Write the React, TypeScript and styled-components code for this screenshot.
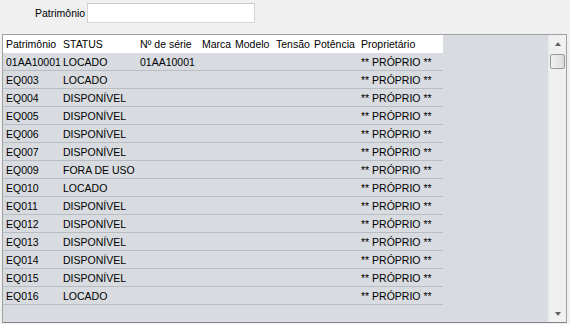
import React from 'react';
import styled, { createGlobalStyle } from 'styled-components';

const GlobalStyle = createGlobalStyle`
	html, body {
		margin: 0;
		padding: 0;
		background: #f0f0f0;
		font-family: Tahoma, "Liberation Sans", "DejaVu Sans", sans-serif;
		font-size: 10.5px;
		color: #000;
	}
`;

const COLUMNS = '58px 77px 62px 33px 41px 38px 47px 84px';

const rows: Array<[string, string, string]> = [
	['01AA10001', 'LOCADO', '01AA10001'],
	['EQ003', 'LOCADO', ''],
	['EQ004', 'DISPONÍVEL', ''],
	['EQ005', 'DISPONÍVEL', ''],
	['EQ006', 'DISPONÍVEL', ''],
	['EQ007', 'DISPONÍVEL', ''],
	['EQ009', 'FORA DE USO', ''],
	['EQ010', 'LOCADO', ''],
	['EQ011', 'DISPONÍVEL', ''],
	['EQ012', 'DISPONÍVEL', ''],
	['EQ013', 'DISPONÍVEL', ''],
	['EQ014', 'DISPONÍVEL', ''],
	['EQ015', 'DISPONÍVEL', ''],
	['EQ016', 'LOCADO', ''],
];

const Page = styled.div`
	width: 570px;
	height: 324px;
	display: flex;
	flex-direction: column;
	overflow: hidden;
`;

const FilterBar = styled.div`
	height: 34px;
	display: flex;
	align-items: flex-start;
	padding: 3px 0 0 35px;
	box-sizing: border-box;
	gap: 3px;
`;

const Label = styled.label`
	line-height: 20px;
	width: 49px;
	text-align: right;
	white-space: nowrap;
`;

const Input = styled.input`
	width: 168px;
	height: 20px;
	margin: 0;
	box-sizing: border-box;
	border: 1px solid #d4d4d4;
	border-top-color: #c8c8c8;
	background: #fff;
	padding: 0 3px;
	font: inherit;
	outline: none;
`;

const GridBox = styled.div`
	margin: 0 3px 0 2px;
	height: 289px;
	box-sizing: border-box;
	border: 1px solid #a0a0a0;
	border-bottom-color: #828790;
	display: flex;
	background: #d8dce0;
`;

const DataArea = styled.div`
	flex: 1;
	display: flex;
	flex-direction: column;
	overflow: hidden;
`;

const Row = styled.div<{ $header?: boolean }>`
	display: grid;
	grid-template-columns: ${COLUMNS};
	height: 18px;
	box-sizing: border-box;
	width: 440px;
	background: ${p => (p.$header ? '#fff' : '#d8dce0')};
	border-bottom: 1px solid ${p => (p.$header ? '#fff' : '#b9bdc1')};
`;

const Cell = styled.div`
	padding-left: 3px;
	line-height: 18px;
	white-space: nowrap;
	&:not(:first-child) {
		padding-left: 2px;
	}
`;

const ScrollBar = styled.div`
	width: 17px;
	background: #f0f0f0;
	display: flex;
	flex-direction: column;
	align-items: center;
	border-left: 1px solid #e8e8e8;
`;

const Arrow = styled.div<{ $down?: boolean }>`
	height: 17px;
	width: 17px;
	display: flex;
	align-items: center;
	justify-content: center;
	&::after {
		content: '';
		width: 0;
		height: 0;
		border-left: 3px solid transparent;
		border-right: 3px solid transparent;
		${p => (p.$down ? 'border-top: 4px solid #606060;' : 'border-bottom: 4px solid #606060;')}
	}
`;

const Thumb = styled.div`
	width: 15px;
	height: 15px;
	box-sizing: border-box;
	border: 1px solid #9a9a9a;
	border-radius: 2px;
	background: linear-gradient(to right, #f2f2f2, #dcdcdc);
	margin-top: 2px;
`;

const Track = styled.div`
	flex: 1;
`;

export default function App() {
	return (
		<Page>
			<GlobalStyle />
			<FilterBar>
				<Label>Patrimônio</Label>
				<Input />
			</FilterBar>
			<GridBox>
				<DataArea>
					<Row $header>
						<Cell>Patrimônio</Cell>
						<Cell>STATUS</Cell>
						<Cell>Nº de série</Cell>
						<Cell>Marca</Cell>
						<Cell>Modelo</Cell>
						<Cell>Tensão</Cell>
						<Cell>Potência</Cell>
						<Cell>Proprietário</Cell>
					</Row>
					{rows.map(([id, status, serie]) => (
						<Row key={id}>
							<Cell>{id}</Cell>
							<Cell>{status}</Cell>
							<Cell>{serie}</Cell>
							<Cell />
							<Cell />
							<Cell />
							<Cell />
							<Cell>** PRÓPRIO **</Cell>
						</Row>
					))}
				</DataArea>
				<ScrollBar>
					<Arrow />
					<Thumb />
					<Track />
					<Arrow $down />
				</ScrollBar>
			</GridBox>
		</Page>
	);
}
